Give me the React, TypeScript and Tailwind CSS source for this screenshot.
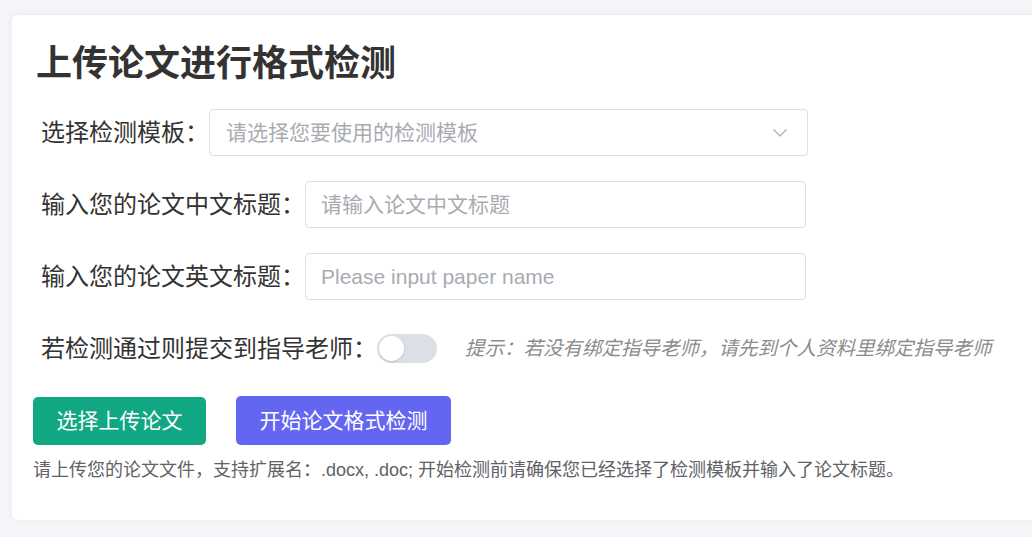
import React from "react";

const font = { fontFamily: '"Liberation Sans", "Noto Sans CJK SC", sans-serif' };

function Chevron() {
  return (
    <svg width="16" height="10" viewBox="0 0 16 10" fill="none">
      <polyline points="1.5,1.5 8,8 14.5,1.5" stroke="#a8abb2" strokeWidth="1.2" />
    </svg>
  );
}

function Toggle() {
  return (
    <div className="w-[60px] h-[29px] rounded-full bg-[#dcdfe6] p-[2px] flex items-center">
      <div className="w-[25px] h-[25px] rounded-full bg-white shadow-sm" />
    </div>
  );
}

export default function App() {
  return (
    <div className="min-h-[537px] w-[1032px] overflow-hidden bg-[#f5f6fa] pt-[15px] pl-[12px] pb-[17px]" style={font}>
      <div className="w-[1040px] bg-white rounded-md shadow-[0_0_10px_rgba(0,0,0,0.06)] pl-[21px] pt-[22px] pb-[38px]">
        <h1 className="ml-[3px] text-[36px] leading-[54px] font-bold text-[#333]">上传论文进行格式检测</h1>

        <div className="mt-[18px] flex flex-col gap-[25px] ml-[8px] text-[24px] text-[#333]">
          <div className="flex items-center h-[47px]">
            <span>选择检测模板：</span>
            <div className="w-[599px] h-[47px] border border-[#dcdfe6] rounded-[4px] flex items-center justify-between pl-[16px] pr-[19px]">
              <span className="text-[21px] text-[#a8abb2]">请选择您要使用的检测模板</span>
              <Chevron />
            </div>
          </div>

          <div className="flex items-center h-[47px]">
            <span>输入您的论文中文标题：</span>
            <div className="w-[501px] h-[47px] border border-[#dcdfe6] rounded-[4px] flex items-center pl-[15px]">
              <span className="text-[21px] text-[#a8abb2]">请输入论文中文标题</span>
            </div>
          </div>

          <div className="flex items-center h-[47px]">
            <span>输入您的论文英文标题：</span>
            <div className="w-[501px] h-[47px] border border-[#dcdfe6] rounded-[4px] flex items-center pl-[15px]">
              <span className="text-[21px] text-[#a8abb2]">Please input paper name</span>
            </div>
          </div>

          <div className="flex items-center h-[47px]">
            <span>若检测通过则提交到指导老师：</span>
            <Toggle />
            <span className="ml-[28px] text-[19.5px] italic text-[#8c8c8c]">
              提示：若没有绑定指导老师，请先到个人资料里绑定指导老师
            </span>
          </div>
        </div>

        <div className="mt-[24px] flex items-center gap-[30px]">
          <button className="h-[48px] px-[23.5px] rounded-[5px] bg-[#12a783] text-white text-[21px]">选择上传论文</button>
          <button className="h-[49px] px-[23.5px] rounded-[5px] bg-[#6366f1] text-white text-[21px]">开始论文格式检测</button>
        </div>

        <p className="mt-[13px] text-[18px] leading-[24px] text-[#606266]">
          请上传您的论文文件，支持扩展名：.docx, .doc; 开始检测前请确保您已经选择了检测模板并输入了论文标题。
        </p>
      </div>
    </div>
  );
}
